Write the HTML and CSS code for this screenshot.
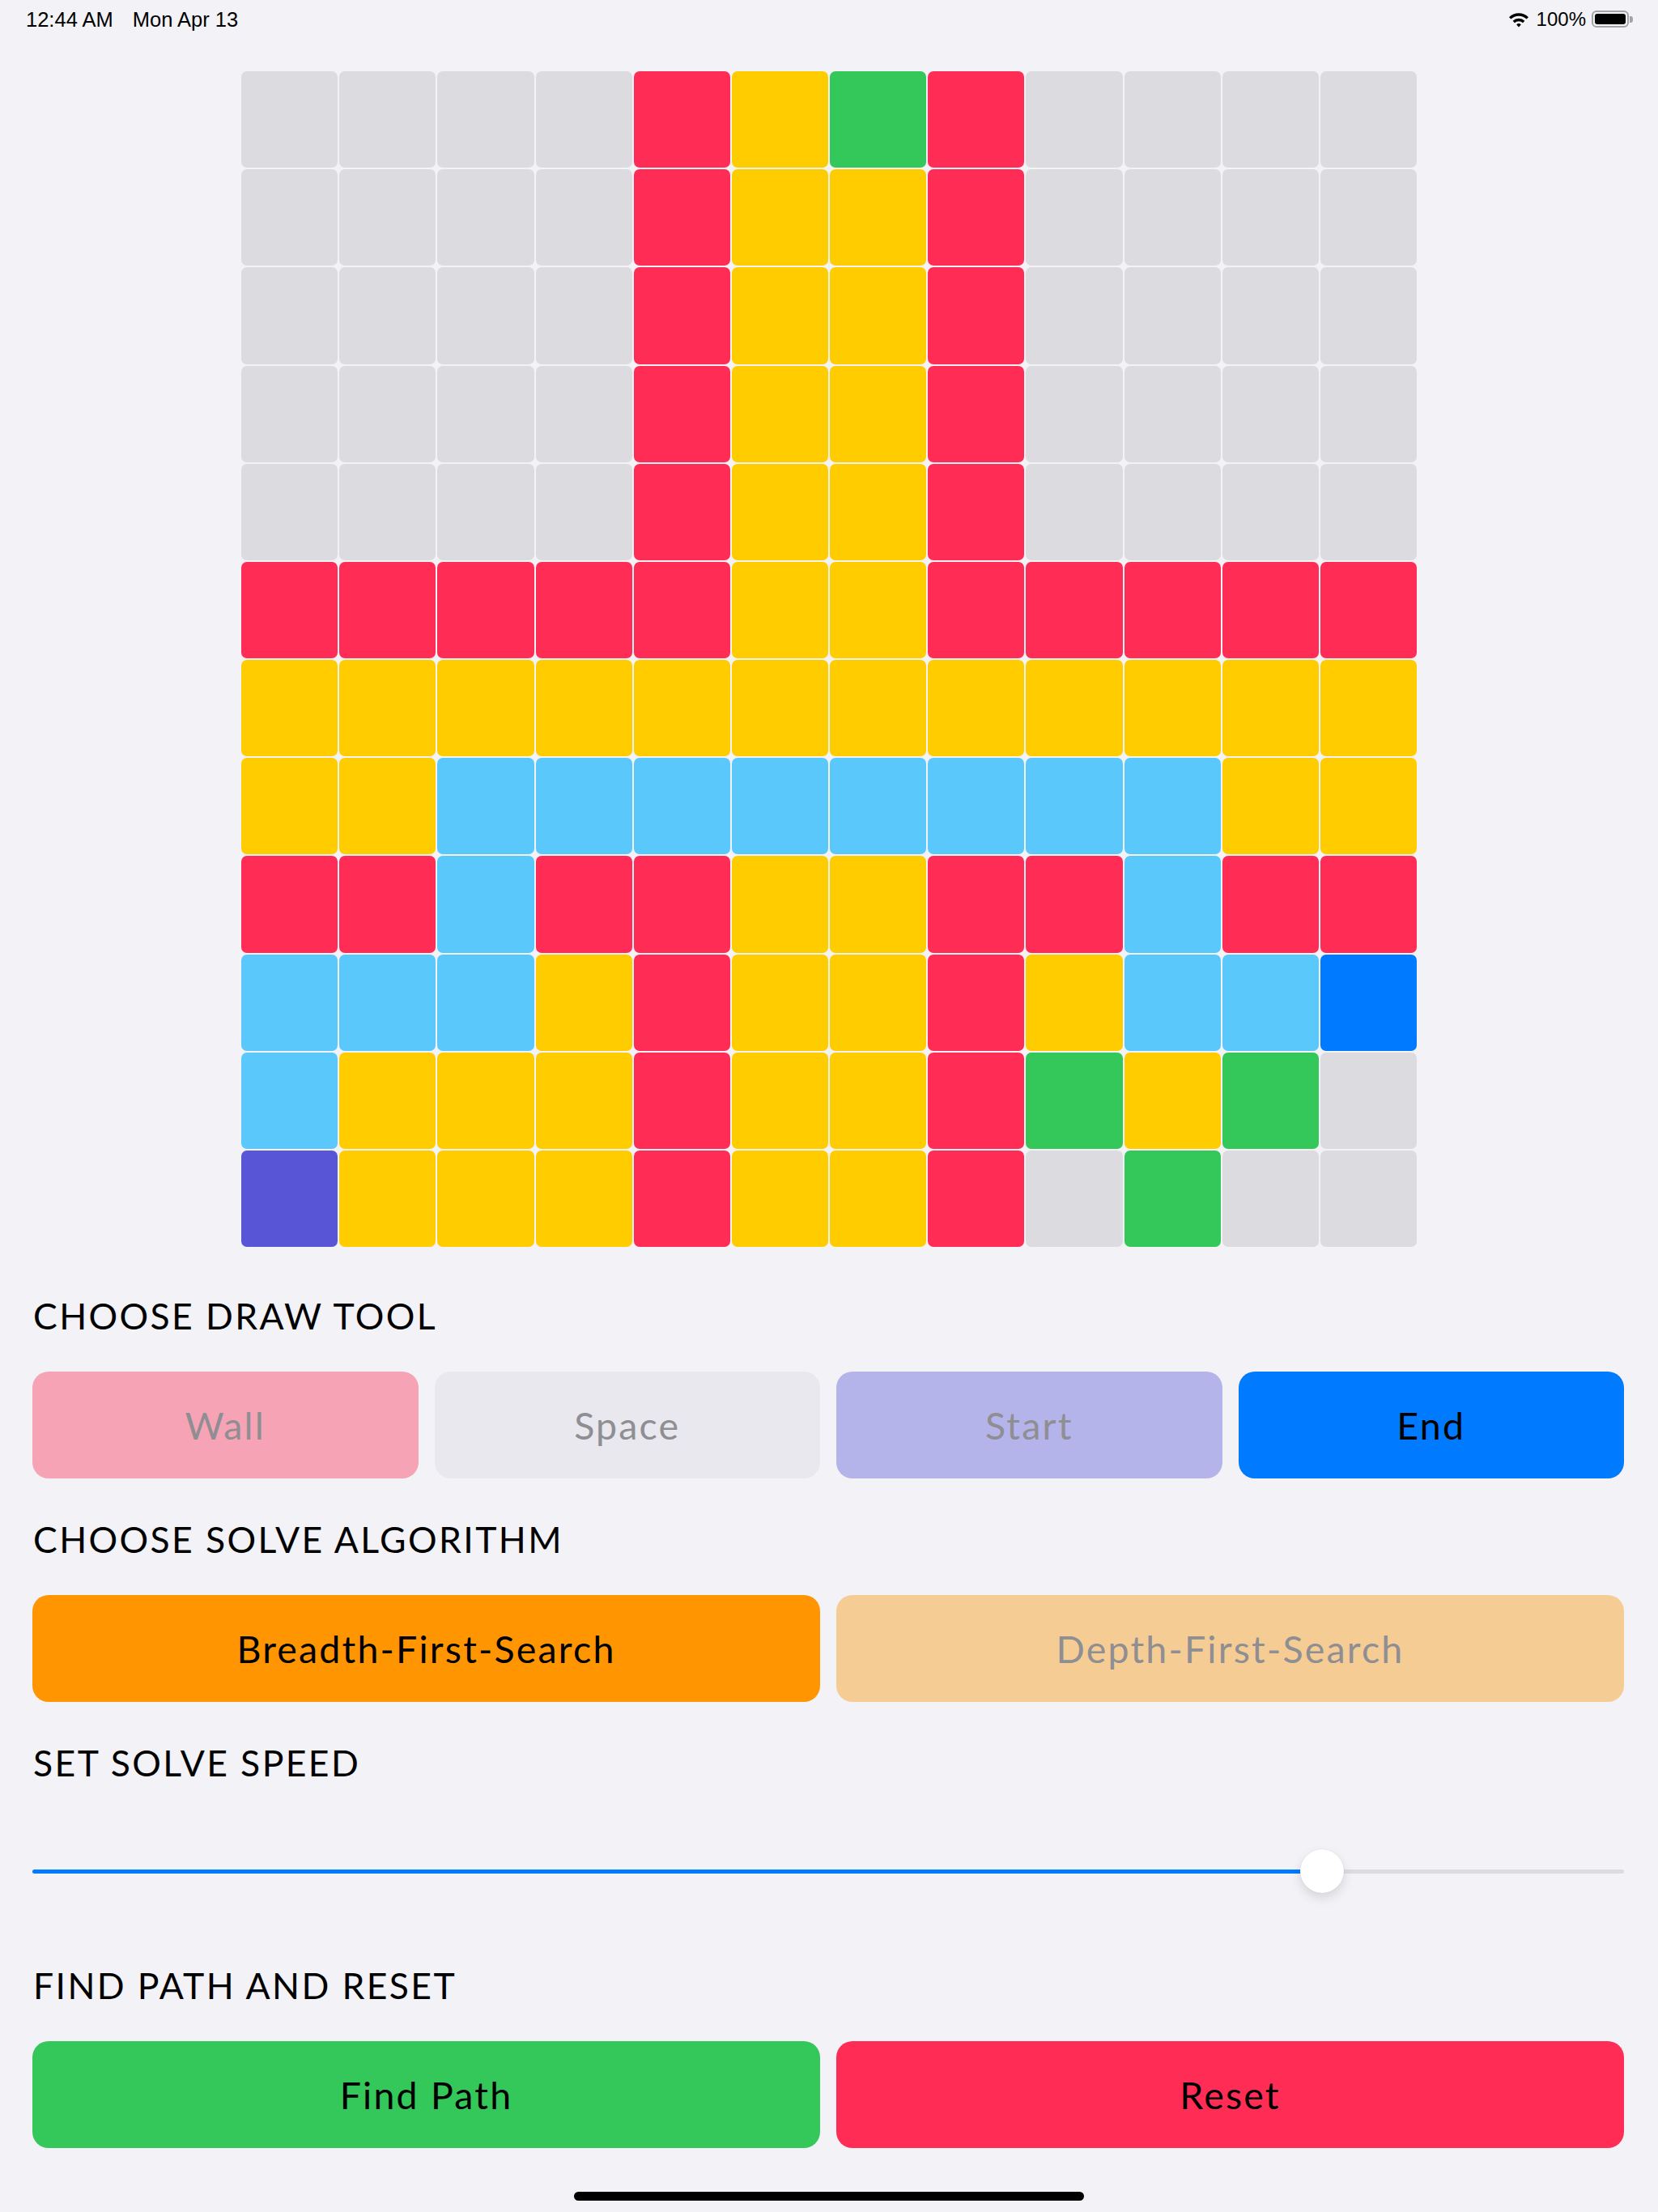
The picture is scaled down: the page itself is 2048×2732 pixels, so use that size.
FILE: index.html
```html
<!DOCTYPE html>
<html lang="en">
<head>
<meta charset="utf-8">
<title>Path Finder</title>
<link rel="stylesheet" href="styles.css">
</head>
<body>
<div class="status-bar">
  <div class="status-left">
    <span class="time">12:44 AM</span>
    <span class="date">Mon Apr 13</span>
  </div>
  <div class="status-right">
    <svg class="wifi" width="26" height="20" viewBox="0 0 26 20">
      <path d="M1 7.2 A17 17 0 0 1 25 7.2 L22.6 9.6 A13.6 13.6 0 0 0 3.4 9.6 Z" fill="#000"/>
      <path d="M5.6 11.8 A10.5 10.5 0 0 1 20.4 11.8 L18 14.2 A7.1 7.1 0 0 0 8 14.2 Z" fill="#000"/>
      <path d="M10.2 16.4 A4 4 0 0 1 15.8 16.4 L13 19.4 Z" fill="#000"/>
    </svg>
    <span class="battery-pct">100%</span>
    <div class="battery">
      <div class="battery-body"><div class="battery-fill"></div></div>
      <div class="battery-nub"></div>
    </div>
  </div>
</div>

<div class="grid">
  <div class="cell g"></div><div class="cell g"></div><div class="cell g"></div><div class="cell g"></div><div class="cell r"></div><div class="cell y"></div><div class="cell gr"></div><div class="cell r"></div><div class="cell g"></div><div class="cell g"></div><div class="cell g"></div><div class="cell g"></div>
  <div class="cell g"></div><div class="cell g"></div><div class="cell g"></div><div class="cell g"></div><div class="cell r"></div><div class="cell y"></div><div class="cell y"></div><div class="cell r"></div><div class="cell g"></div><div class="cell g"></div><div class="cell g"></div><div class="cell g"></div>
  <div class="cell g"></div><div class="cell g"></div><div class="cell g"></div><div class="cell g"></div><div class="cell r"></div><div class="cell y"></div><div class="cell y"></div><div class="cell r"></div><div class="cell g"></div><div class="cell g"></div><div class="cell g"></div><div class="cell g"></div>
  <div class="cell g"></div><div class="cell g"></div><div class="cell g"></div><div class="cell g"></div><div class="cell r"></div><div class="cell y"></div><div class="cell y"></div><div class="cell r"></div><div class="cell g"></div><div class="cell g"></div><div class="cell g"></div><div class="cell g"></div>
  <div class="cell g"></div><div class="cell g"></div><div class="cell g"></div><div class="cell g"></div><div class="cell r"></div><div class="cell y"></div><div class="cell y"></div><div class="cell r"></div><div class="cell g"></div><div class="cell g"></div><div class="cell g"></div><div class="cell g"></div>
  <div class="cell r"></div><div class="cell r"></div><div class="cell r"></div><div class="cell r"></div><div class="cell r"></div><div class="cell y"></div><div class="cell y"></div><div class="cell r"></div><div class="cell r"></div><div class="cell r"></div><div class="cell r"></div><div class="cell r"></div>
  <div class="cell y"></div><div class="cell y"></div><div class="cell y"></div><div class="cell y"></div><div class="cell y"></div><div class="cell y"></div><div class="cell y"></div><div class="cell y"></div><div class="cell y"></div><div class="cell y"></div><div class="cell y"></div><div class="cell y"></div>
  <div class="cell y"></div><div class="cell y"></div><div class="cell b"></div><div class="cell b"></div><div class="cell b"></div><div class="cell b"></div><div class="cell b"></div><div class="cell b"></div><div class="cell b"></div><div class="cell b"></div><div class="cell y"></div><div class="cell y"></div>
  <div class="cell r"></div><div class="cell r"></div><div class="cell b"></div><div class="cell r"></div><div class="cell r"></div><div class="cell y"></div><div class="cell y"></div><div class="cell r"></div><div class="cell r"></div><div class="cell b"></div><div class="cell r"></div><div class="cell r"></div>
  <div class="cell b"></div><div class="cell b"></div><div class="cell b"></div><div class="cell y"></div><div class="cell r"></div><div class="cell y"></div><div class="cell y"></div><div class="cell r"></div><div class="cell y"></div><div class="cell b"></div><div class="cell b"></div><div class="cell db"></div>
  <div class="cell b"></div><div class="cell y"></div><div class="cell y"></div><div class="cell y"></div><div class="cell r"></div><div class="cell y"></div><div class="cell y"></div><div class="cell r"></div><div class="cell gr"></div><div class="cell y"></div><div class="cell gr"></div><div class="cell g"></div>
  <div class="cell i"></div><div class="cell y"></div><div class="cell y"></div><div class="cell y"></div><div class="cell r"></div><div class="cell y"></div><div class="cell y"></div><div class="cell r"></div><div class="cell g"></div><div class="cell gr"></div><div class="cell g"></div><div class="cell g"></div>
</div>

<div class="controls">
  <h2 class="heading first">CHOOSE DRAW TOOL</h2>
  <div class="btn-row four">
    <button class="btn wall-off">Wall</button>
    <button class="btn space-off">Space</button>
    <button class="btn start-off">Start</button>
    <button class="btn end-on">End</button>
  </div>

  <h2 class="heading">CHOOSE SOLVE ALGORITHM</h2>
  <div class="btn-row two">
    <button class="btn bfs-on">Breadth-First-Search</button>
    <button class="btn dfs-off">Depth-First-Search</button>
  </div>

  <h2 class="heading">SET SOLVE SPEED</h2>
  <div class="slider">
    <div class="track">
      <div class="track-fill" style="width: 81.03%"></div>
      <div class="thumb" style="left: calc(81.03% - 27px)"></div>
    </div>
  </div>

  <h2 class="heading">FIND PATH AND RESET</h2>
  <div class="btn-row two">
    <button class="btn find-on">Find Path</button>
    <button class="btn reset-on">Reset</button>
  </div>
</div>

<div class="home-indicator"></div>
</body>
</html>
```

FILE: styles.css
```css
* {
  box-sizing: border-box;
}

html, body {
  margin: 0;
  padding: 0;
}

body {
  background: #f2f2f7;
  font-family: Lato, "Noto Sans", "Liberation Sans", sans-serif;
  color: #000;
  width: 2048px;
  height: 2732px;
  overflow: hidden;
}

/* status bar */
.status-bar {
  height: 47px;
  display: flex;
  align-items: center;
  justify-content: space-between;
  padding: 0 31px 0 32px;
  font-family: "Liberation Sans", Arial, sans-serif;
  font-size: 25.5px;
  line-height: 26px;
}

.status-left {
  display: flex;
  gap: 24px;
}

.status-right {
  display: flex;
  align-items: center;
  font-size: 24px;
}

.wifi {
  display: block;
  margin-right: 9px;
}

.battery-pct {
  margin-right: 7px;
}

.battery {
  display: flex;
  align-items: center;
}

.battery-body {
  width: 46px;
  height: 21px;
  border: 2px solid #a3a3a6;
  border-radius: 6px;
  padding: 2px;
}

.battery-fill {
  width: 100%;
  height: 100%;
  background: #000;
  border-radius: 3px;
}

.battery-nub {
  width: 4px;
  height: 8px;
  background: #a3a3a6;
  border-radius: 0 3px 3px 0;
  margin-left: 1px;
}

/* grid */
.grid {
  width: 1452px;
  margin: 41px auto 0;
  display: grid;
  grid-template-columns: repeat(12, 1fr);
  gap: 2px;
}

.cell {
  aspect-ratio: 1 / 1;
  border-radius: 7px;
}

.g { background: #dcdbe0; }
.r { background: #ff2d55; }
.y { background: #ffcc00; }
.gr { background: #34c759; }
.b { background: #5ac8fa; }
.db { background: #007aff; }
.i { background: #5856d6; }

/* controls */
.controls {
  padding: 0 42px 0 40px;
}

.heading {
  margin: 49px 0 43px;
  padding-left: 1px;
  font-size: 44.5px;
  line-height: 52px;
  font-weight: 400;
  letter-spacing: 2.4px;
}

.heading.first {
  margin-top: 59px;
}

.btn-row {
  display: grid;
  gap: 20px;
}

.btn-row.four {
  grid-template-columns: repeat(4, 1fr);
}

.btn-row.two {
  grid-template-columns: repeat(2, 1fr);
}

.btn {
  height: 132px;
  border: none;
  border-radius: 20px;
  font-family: inherit;
  font-size: 46.5px;
  font-weight: 400;
  letter-spacing: 2.2px;
  color: #000;
  display: flex;
  align-items: center;
  justify-content: center;
  padding: 0;
}

.wall-off { background: #f7a3b6; color: #8e8e93; }
.space-off { background: #e8e8ee; color: #8e8e93; }
.start-off { background: #b4b4ea; color: #8e8e93; }
.end-on { background: #007aff; }
.bfs-on { background: #ff9500; }
.dfs-off { background: #f6cc95; color: #8e8e93; }
.find-on { background: #34c759; }
.reset-on { background: #ff2d55; }

/* slider */
.slider {
  height: 131px;
  display: flex;
  align-items: center;
}

.track {
  position: relative;
  width: 100%;
  height: 5px;
  border-radius: 3px;
  background: #dcdbe0;
}

.track-fill {
  height: 100%;
  background: #007aff;
  border-radius: 3px 0 0 3px;
}

.thumb {
  position: absolute;
  top: -25px;
  width: 54px;
  height: 54px;
  border-radius: 50%;
  background: #fff;
  box-shadow: 0 6px 14px rgba(0, 0, 0, 0.12), 0 0 1px rgba(0, 0, 0, 0.15);
}

/* home indicator */
.home-indicator {
  width: 630px;
  height: 11px;
  margin: 54px 0 0 709px;
  background: #000;
  border-radius: 6px;
}
```
